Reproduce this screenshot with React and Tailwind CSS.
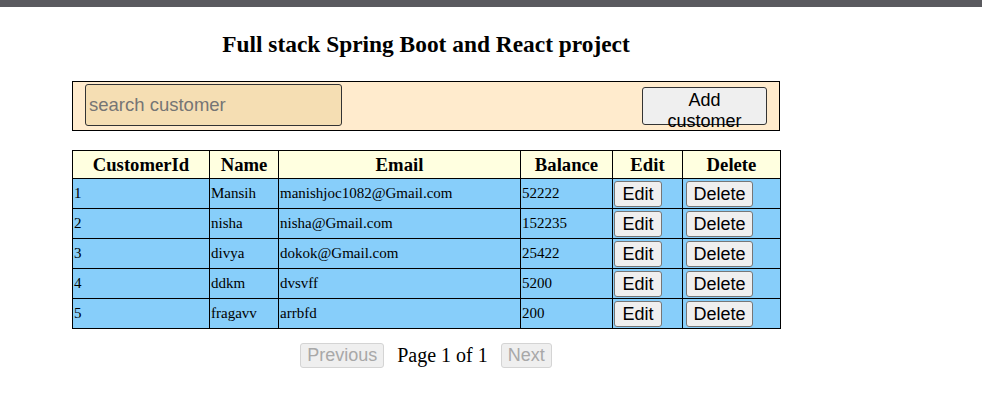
import React from 'react';

const customers = [
  { id: 1, name: 'Mansih', email: 'manishjoc1082@Gmail.com', balance: '52222' },
  { id: 2, name: 'nisha', email: 'nisha@Gmail.com', balance: '152235' },
  { id: 3, name: 'divya', email: 'dokok@Gmail.com', balance: '25422' },
  { id: 4, name: 'ddkm', email: 'dvsvff', balance: '5200' },
  { id: 5, name: 'fragavv', email: 'arrbfd', balance: '200' },
];

const serif = "font-['Liberation_Serif','Times_New_Roman',serif]";
const sans = "font-['Liberation_Sans',Arial,sans-serif]";
const btn = `${sans} text-[18px] leading-none h-[26px] px-[6px] bg-[#efefef] border border-[#767676] rounded-[3px] text-black`;

export default function App() {
  return (
    <div className="min-h-[410px] bg-white">
      <div className="h-[7px] bg-[#5a5a5f]" />

      <div className="ml-[72px] w-[708px]">
        <h2 className={`${serif} mt-[24px] text-center text-[23.4px] font-bold leading-[27px] text-black`}>
          Full stack Spring Boot and React project
        </h2>

        <div className="mt-[23px] h-[50px] border border-black bg-[#ffebcd] flex items-center justify-between pl-[12px] pr-[12px]">
          <input
            type="text"
            placeholder="search customer"
            className={`${sans} w-[257px] h-[42px] -mt-[2px] px-[3px] text-[18.5px] bg-[#f5deb3] border border-[#333] rounded-[3px] placeholder:text-[#757575] outline-none`}
          />
          <button className={`${sans} w-[125px] h-[38px] px-[10px] pt-[2px] flex flex-col items-center justify-start text-[18px] leading-[21px] bg-[#efefef] border border-[#333] rounded-[3px] text-black overflow-visible`}>
            <span>Add</span>
            <span>customer</span>
          </button>
        </div>

        <table className="mt-[19px] w-[708px] table-fixed border-collapse">
          <colgroup>
            <col className="w-[137px]" />
            <col className="w-[69px]" />
            <col className="w-[242px]" />
            <col className="w-[92px]" />
            <col className="w-[70px]" />
            <col className="w-[98px]" />
          </colgroup>
          <thead>
            <tr className="h-[28px] bg-[#ffffe0]">
              {['CustomerId', 'Name', 'Email', 'Balance', 'Edit', 'Delete'].map((h) => (
                <th key={h} className={`${serif} border border-black p-0 text-[18.7px] font-bold leading-[21px] text-black`}>
                  {h}
                </th>
              ))}
            </tr>
          </thead>
          <tbody>
            {customers.map((c) => (
              <tr key={c.id} className="h-[30px] bg-[#87cefa]">
                <td className={`${serif} border border-black px-[1px] py-0 text-[15px] text-black`}>{c.id}</td>
                <td className={`${serif} border border-black px-[1px] py-0 text-[15px] text-black`}>{c.name}</td>
                <td className={`${serif} border border-black px-[1px] py-0 text-[15px] text-black`}>{c.email}</td>
                <td className={`${serif} border border-black px-[1px] py-0 text-[15px] text-black`}>{c.balance}</td>
                <td className="border border-black px-[1px] py-0">
                  <button className={`${btn} w-[48px] align-middle`}>Edit</button>
                </td>
                <td className="border border-black pl-[3px] py-0">
                  <button className={`${btn} w-[67px] align-middle`}>Delete</button>
                </td>
              </tr>
            ))}
          </tbody>
        </table>

        <div className="mt-[11px] flex items-center justify-center gap-[13px]">
          <button
            disabled
            className={`${sans} h-[25px] px-[6px] text-[18px] leading-none bg-[#efefef] border border-[#d4d4d4] rounded-[3px] text-[#a8a8a8]`}
          >
            Previous
          </button>
          <span className={`${serif} text-[20px] text-black`}>Page 1 of 1</span>
          <button
            disabled
            className={`${sans} h-[25px] px-[6px] text-[18px] leading-none bg-[#efefef] border border-[#d4d4d4] rounded-[3px] text-[#a8a8a8]`}
          >
            Next
          </button>
        </div>
      </div>
    </div>
  );
}
